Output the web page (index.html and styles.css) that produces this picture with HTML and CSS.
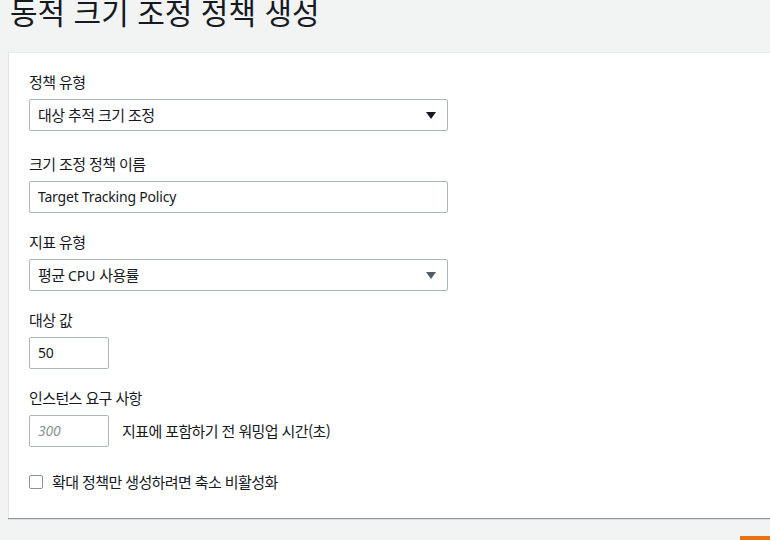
FILE: index.html
```html
<!DOCTYPE html>
<html lang="ko">
<head>
<meta charset="utf-8">
<title>동적 크기 조정 정책 생성</title>
<link rel="stylesheet" href="styles.css">
</head>
<body>
<div class="page">
  <h1 class="title">동적 크기 조정 정책 생성</h1>
  <div class="card">
    <div class="field field-first">
      <div class="label ko">정책 유형</div>
      <div class="select">
        <span class="ko">대상 추적 크기 조정</span>
        <span class="arrow arrow-dark"></span>
      </div>
    </div>
    <div class="field">
      <div class="label ko">크기 조정 정책 이름</div>
      <div class="input latin">Target Tracking Policy</div>
    </div>
    <div class="field">
      <div class="label ko">지표 유형</div>
      <div class="select">
        <span class="ko">평균 <span class="latin">CPU</span> 사용률</span>
        <span class="arrow arrow-gray"></span>
      </div>
    </div>
    <div class="field">
      <div class="label ko">대상 값</div>
      <div class="input input-small latin">50</div>
    </div>
    <div class="field field-last">
      <div class="label ko">인스턴스 요구 사항</div>
      <div class="inline">
        <div class="input input-small latin placeholder">300</div>
        <span class="ko">지표에 포함하기 전 워밍업 시간(초)</span>
      </div>
    </div>
    <div class="check-row">
      <span class="checkbox"></span>
      <span class="ko">확대 정책만 생성하려면 축소 비활성화</span>
    </div>
  </div>
  <div class="footer">
    <span class="btn-primary">정책 생성</span>
  </div>
</div>
</body>
</html>
```

FILE: styles.css
```css
html, body {
  margin: 0;
  padding: 0;
  background: #f2f3f3;
  overflow: hidden;
}

body {
  font-family: "Noto Sans", "Noto Sans CJK KR", sans-serif;
  color: #16191f;
  font-size: 14px;
  line-height: 20px;
}

.page {
  width: 900px;
  padding-left: 8px;
}

.title {
  margin: -7px 0 0 2px;
  font-family: "Noto Sans CJK KR", sans-serif;
  font-weight: 400;
  font-size: 30px;
  line-height: 36px;
  letter-spacing: 0;
  color: #16191f;
}

.ko {
  font-family: "Noto Sans CJK KR", sans-serif;
  font-size: 15px;
  letter-spacing: -0.6px;
}

.latin {
  font-family: "Noto Sans", sans-serif;
  font-size: 14px;
  letter-spacing: -0.2px;
}

.ko .latin {
  letter-spacing: 0;
}

.card {
  margin-top: 23px;
  background: #ffffff;
  border-top: 1px solid #eaeded;
  border-left: 1px solid #e3e6e6;
  box-shadow: 0 1px 0 0 #8d9999, 0 2px 0 0 #d9dede;
  padding: 19px 20px 26px 20px;
}

.field {
  margin-bottom: 19px;
}

.field-first {
  margin-bottom: 23px;
}

.field-last {
  margin-bottom: 25px;
}

.label {
  line-height: 20px;
  margin-bottom: 7px;
}

.select,
.input {
  box-sizing: border-box;
  width: 419px;
  height: 32px;
  border: 1px solid #aab7b8;
  border-radius: 2px;
  padding: 0 11px 0 8px;
  display: flex;
  align-items: center;
  justify-content: space-between;
}

.arrow {
  width: 0;
  height: 0;
  border-left: 5px solid transparent;
  border-right: 5px solid transparent;
  border-top: 7px solid #16191f;
}

.arrow-gray {
  border-top-color: #545b64;
}

.input-small {
  width: 80px;
}

.placeholder {
  color: #879596;
  font-style: italic;
}

.inline {
  display: flex;
  align-items: center;
  gap: 13px;
}

.check-row {
  display: flex;
  align-items: center;
  gap: 9px;
}

.checkbox {
  box-sizing: border-box;
  width: 14px;
  height: 14px;
  border: 1px solid #879596;
  border-radius: 2px;
  background: #ffffff;
}

.footer {
  margin-top: 18px;
  display: flex;
  justify-content: flex-end;
  width: 852px;
}

.btn-primary {
  display: inline-block;
  width: 120px;
  height: 32px;
  background: #ec7211;
  color: #ffffff;
  font-weight: 700;
  text-align: center;
  line-height: 32px;
}
```
